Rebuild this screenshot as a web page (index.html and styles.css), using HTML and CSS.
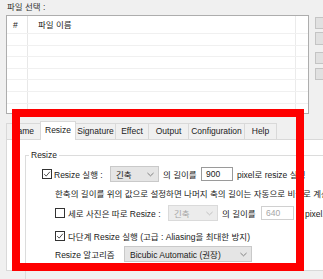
FILE: index.html
```html
<!DOCTYPE html>
<html lang="ko">
<head>
<meta charset="utf-8">
<link rel="stylesheet" href="styles.css">
</head>
<body>
<div class="app">
  <div class="file-label">파일 선택 :</div>
  <div class="file-row">
    <div class="listbox">
      <div class="lb-head">
        <span class="c-num">#</span>
        <span class="c-name">파일 이름</span>
        <span class="c-extra"></span>
      </div>
      <div class="lb-row"><span class="c-num"></span><span class="c-name"></span><span class="c-extra"></span></div>
      <div class="lb-row"><span class="c-num"></span><span class="c-name"></span><span class="c-extra"></span></div>
      <div class="lb-row"><span class="c-num"></span><span class="c-name"></span><span class="c-extra"></span></div>
      <div class="lb-row"><span class="c-num"></span><span class="c-name"></span><span class="c-extra"></span></div>
      <div class="lb-row"><span class="c-num"></span><span class="c-name"></span><span class="c-extra"></span></div>
      <div class="lb-row"><span class="c-num"></span><span class="c-name"></span><span class="c-extra"></span></div>
      <div class="lb-row"><span class="c-num"></span><span class="c-name"></span><span class="c-extra"></span></div>
    </div>
    <div class="btn-col">
      <div class="btn b1"></div>
      <div class="btn b2"></div>
      <div class="btn b3"></div>
      <div class="btn b4"></div>
    </div>
  </div>

  <div class="tabs">
    <div class="tab t-name">ame</div>
    <div class="tab t-resize active">Resize</div>
    <div class="tab t-sig">Signature</div>
    <div class="tab t-effect">Effect</div>
    <div class="tab t-output">Output</div>
    <div class="tab t-config">Configuration</div>
    <div class="tab t-help">Help</div>
  </div>

  <div class="panel">
    <div class="group">
      <div class="group-title">Resize</div>

      <div class="row r1">
        <span class="chk checked"><svg viewBox="0 0 10 10" width="8" height="8"><path d="M1.5 5.2 L4 7.6 L8.6 2.2" fill="none" stroke="#333" stroke-width="1.1"/></svg></span>
        <span class="lbl l-run">Resize 실행 :</span>
        <span class="sel s1"><span class="sel-text">긴축</span><svg class="arrow" viewBox="0 0 8 5" width="7" height="5"><path d="M0.5 0.8 L4 4 L7.5 0.8" fill="none" stroke="#666" stroke-width="0.9"/></svg></span>
        <span class="lbl l-len">의 길이를</span>
        <span class="inp i1">900</span>
        <span class="lbl l-px">pixel로 resize 실행</span>
      </div>

      <div class="row r2">
        <span class="lbl note">한축의 길이를 위의 값으로 설정하면 나머지 축의 길이는 자동으로 비율로 계산됩니다.</span>
      </div>

      <div class="row r3">
        <span class="chk"></span>
        <span class="lbl l-vert">세로 사진은 따로 Resize :</span>
        <span class="sel s2 disabled"><span class="sel-text">긴축</span><svg class="arrow" viewBox="0 0 8 5" width="7" height="5"><path d="M0.5 0.8 L4 4 L7.5 0.8" fill="none" stroke="#b5b5b5" stroke-width="0.9"/></svg></span>
        <span class="lbl l-len2">의 길이를</span>
        <span class="inp i2 disabled">640</span>
        <span class="lbl l-px2">pixel로</span>
      </div>

      <div class="row r4">
        <span class="chk checked"><svg viewBox="0 0 10 10" width="8" height="8"><path d="M1.5 5.2 L4 7.6 L8.6 2.2" fill="none" stroke="#333" stroke-width="1.1"/></svg></span>
        <span class="lbl l-multi">다단계 Resize 실행 (고급 : Aliasing을 최대한 방지)</span>
      </div>

      <div class="row r5">
        <span class="lbl l-algo">Resize 알고리즘</span>
        <span class="sel s3"><span class="sel-text">Bicubic Automatic (권장)</span><svg class="arrow" viewBox="0 0 8 5" width="7" height="5"><path d="M0.5 0.8 L4 4 L7.5 0.8" fill="none" stroke="#666" stroke-width="0.9"/></svg></span>
      </div>
    </div>
  </div>
</div>
<div class="highlight"></div>
</body>
</html>
```

FILE: styles.css
```css
* { box-sizing: border-box; }

html, body {
  margin: 0;
  padding: 0;
  background: #f0f0f0;
  overflow: hidden;
}

body {
  width: 323px;
  height: 279px;
  position: relative;
  font-family: "Liberation Sans", "Noto Sans CJK KR", sans-serif;
  font-size: 8.5px;
  color: #1a1a1a;
}

.app {
  width: 323px;
}

.file-label {
  height: 15px;
  line-height: 14px;
  padding-left: 7px;
  color: #333;
}

.file-row {
  display: flex;
  align-items: flex-start;
  height: 99px;
}

.listbox {
  margin-left: 6px;
  width: 303px;
  height: 99px;
  border: 1px solid #adadad;
  background: #fff;
  overflow: hidden;
  flex: none;
}

.lb-head {
  display: flex;
  height: 17px;
  align-items: stretch;
}

.lb-head .c-num,
.lb-head .c-name {
  line-height: 19px;
  color: #222;
}

.c-num {
  width: 21px;
  padding-left: 6px;
  border-right: 1px solid #e8e8e8;
  flex: none;
}

.c-name {
  width: 268px;
  padding-left: 10px;
  border-right: 1px solid #ebebeb;
  flex: none;
}

.lb-head .c-num { border-right-color: #e3e3e3; }

.c-extra { flex: 1; }

.lb-row {
  display: flex;
  height: 11.6px;
  border-top: 1px solid #f0f0f0;
}

.btn-col {
  margin-left: 6px;
  display: flex;
  flex-direction: column;
  width: 20px;
  flex: none;
}

.btn {
  background: #e1e1e1;
  border: 1px solid #c4c4c4;
  width: 20px;
}

.b1 { margin-top: 2px; height: 12px; }
.b2 { margin-top: 3px; height: 13px; }
.b3 { margin-top: 7px; height: 12px; }
.b4 { margin-top: 4px; height: 12px; }

/* Tabs */
.tabs {
  display: flex;
  align-items: flex-end;
  height: 18px;
  margin-top: 7px;
  margin-left: 6px;
  position: relative;
  z-index: 1;
}

.tab {
  height: 16px;
  line-height: 15px;
  border: 1px solid #d9d9d9;
  border-bottom: none;
  border-left: none;
  background: #f0f0f0;
  text-align: center;
  color: #222;
  flex: none;
  white-space: nowrap;
}

.t-name { width: 35px; border-left: 1px solid #d9d9d9; text-align: right; padding-right: 6px; }
.t-resize { width: 35px; }
.t-sig { width: 40px; }
.t-effect { width: 33px; }
.t-output { width: 40px; }
.t-config { width: 56px; }
.t-help { width: 32px; }

.tab.active {
  height: 19px;
  margin-bottom: -1px;
  background: #fff;
  border-left: 1px solid #d9d9d9;
  margin-left: -1px;
  width: 36px;
  line-height: 16px;
}

/* Panel */
.panel {
  margin-left: 6px;
  width: 330px;
  height: 132px;
  background: #fff;
  border: 1px solid #d9d9d9;
  padding-top: 15px;
  padding-left: 18px;
}

.group {
  border: 1px solid #dcdcdc;
  border-right: none;
  height: 130px;
}

.group-title {
  width: fit-content;
  height: 11px;
  line-height: 11px;
  margin: -6px 0 0 3px;
  padding: 0 2px;
  background: #fff;
  color: #222;
}

.row {
  display: flex;
  align-items: center;
  height: 16px;
  white-space: nowrap;
}

.r1 { margin-top: 5px; padding-left: 16px; }
.r2 { margin-top: 3px; padding-left: 29px; }
.r3 { margin-top: 4px; padding-left: 29px; }
.r4 { margin-top: 7px; padding-left: 29px; }
.r5 { margin-top: 2px; padding-left: 29px; }

.chk {
  width: 10px;
  height: 10px;
  border: 1px solid #333;
  background: #fff;
  display: flex;
  align-items: center;
  justify-content: center;
  flex: none;
}

.lbl { flex: none; }

.l-run { margin-left: 2px; width: 56px; }
.l-len { margin-left: 4px; width: 38px; }
.l-px { margin-left: 4px; }

.note { color: #222; }

.l-vert { margin-left: 3px; width: 100px; }
.l-len2 { margin-left: 4px; width: 39px; }
.l-px2 { margin-left: 11px; }

.l-multi { margin-left: 3px; }
.l-algo { width: 69px; }

.sel {
  display: flex;
  align-items: center;
  height: 16px;
  background: #e5e5e5;
  border: 1px solid #c9c9c9;
  padding-left: 5px;
  padding-right: 4px;
  flex: none;
}

.sel-text { flex: 1; }

.sel .arrow { flex: none; }

.s1 { width: 49px; }
.s2 { width: 50px; }
.s3 { width: 128px; height: 16px; }

.sel.disabled {
  background: #ececec;
  border-color: #dadada;
  color: #a6a6a6;
}

.inp {
  display: flex;
  align-items: center;
  height: 14px;
  border: 1px solid #9a9a9a;
  background: #fff;
  padding-left: 4px;
  flex: none;
  color: #222;
}

.i1 { width: 32px; }
.i2 { width: 33px; }

.inp.disabled {
  border-color: #d0d0d0;
  color: #a6a6a6;
}

/* annotation overlay */
.highlight {
  position: absolute;
  left: 12px;
  top: 109px;
  width: 292px;
  height: 162px;
  border: 8px solid #fe0000;
  z-index: 5;
}
```
